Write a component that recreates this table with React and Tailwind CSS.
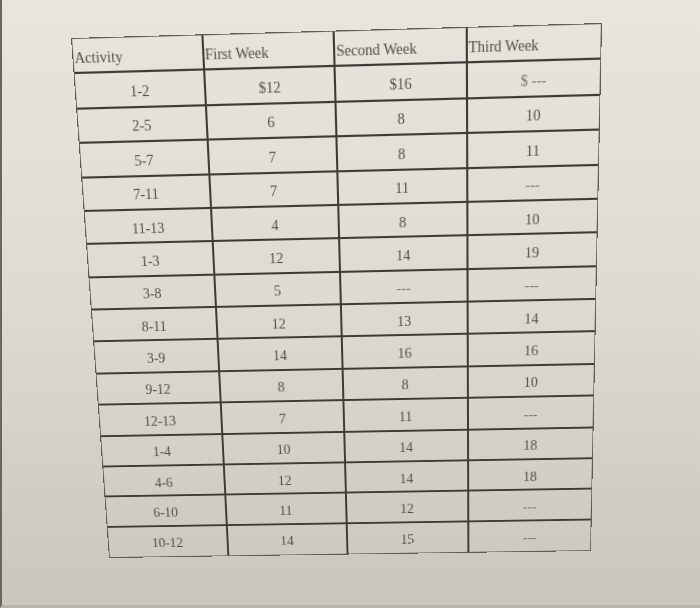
import React from 'react';

const header = ['Activity', 'First Week', 'Second Week', 'Third Week'];

const rows = [
  ['1-2', '$12', '$16', '$ ---'],
  ['2-5', '6', '8', '10'],
  ['5-7', '7', '8', '11'],
  ['7-11', '7', '11', '---'],
  ['11-13', '4', '8', '10'],
  ['1-3', '12', '14', '19'],
  ['3-8', '5', '---', '---'],
  ['8-11', '12', '13', '14'],
  ['3-9', '14', '16', '16'],
  ['9-12', '8', '8', '10'],
  ['12-13', '7', '11', '---'],
  ['1-4', '10', '14', '18'],
  ['4-6', '12', '14', '18'],
  ['6-10', '11', '12', '---'],
  ['10-12', '14', '15', '---'],
];

const App = () => {
  return (
    <div className="w-[700px] h-[608px] overflow-hidden border-l-2 border-b-[3px] border-l-[#6a665f] border-b-[#b9b4aa] bg-linear-to-b from-[#e8e5df] via-[#dedad3] to-[#cbc6bb] pl-[69px] pt-[38px] font-['Liberation_Serif',serif] text-[14px] text-[#514d49]">
      {/* photographed sheet: flat grid, tilted into place */}
      <div className="w-[500px] h-[520px] grid grid-cols-4 grid-rows-16 border border-[#5f5b56] origin-top-left [transform:matrix3d(1.047336,-0.029586,0,-0.000027616,0.080483,1.101344,0,0.00019489,0,0,1,0,0,0,0,1)]">
        {header.map((h, i) => (
          <div
            key={h}
            className={`flex items-center pt-1 pl-px border-b-2 border-[#3d3a37] ${i < 3 ? 'border-r-2' : ''}`}
          >
            {h}
          </div>
        ))}
        {rows.map((r, ri) =>
          r.map((c, ci) => (
            <div
              key={ri + '-' + ci}
              className={`flex items-center justify-center pt-1 border-[#3d3a37] ${ci < 3 ? 'border-r-2' : ''} ${ri < rows.length - 1 ? 'border-b-2' : ''} ${c.includes('---') ? 'text-[#7a7571]' : ''}`}
            >
              {c}
            </div>
          ))
        )}
      </div>
    </div>
  );
};

export default App;
